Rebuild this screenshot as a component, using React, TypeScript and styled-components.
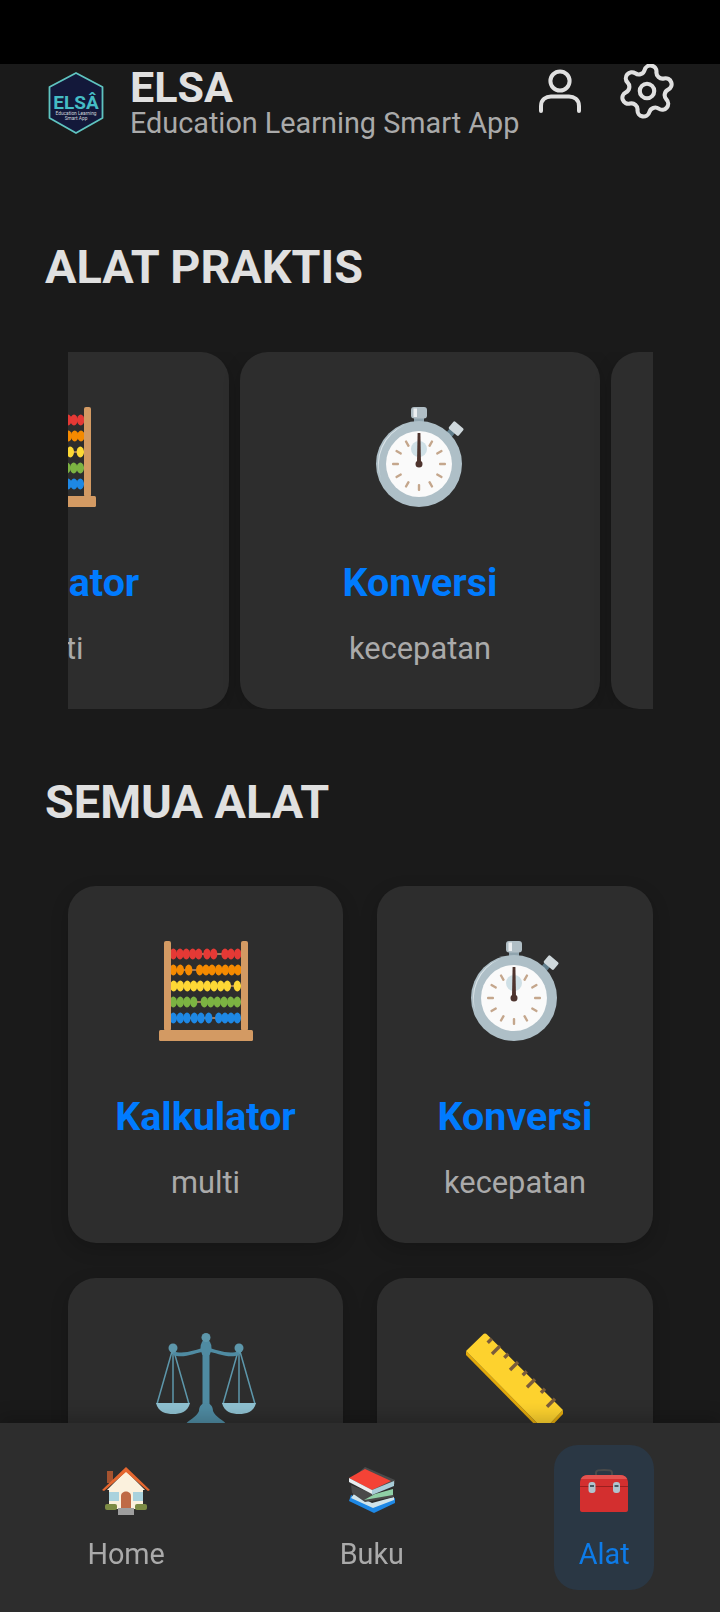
import * as React from 'react';
import styled, { createGlobalStyle } from 'styled-components';

const GlobalStyle = createGlobalStyle`
  html, body {
    margin: 0;
    padding: 0;
    width: 720px;
    height: 1612px;
    overflow: hidden;
    background: #1a1a1a;
    font-family: Roboto, "Liberation Sans", sans-serif;
  }
`;

const StatusBar = styled.div`
  height: 64px;
  background: #000;
`;

const Header = styled.header`
  display: flex;
  align-items: center;
  height: 77px;
  padding: 0 42px 0 46px;
  overflow: hidden;
`;

const Brand = styled.div`
  display: flex;
  align-items: center;
  flex: 1;
`;

const LogoBox = styled.div`
  width: 60px;
  height: 64px;
  margin-right: 24px;
  display: flex;
  align-items: center;
`;

const BrandText = styled.div`
  display: flex;
  flex-direction: column;
`;

const BrandName = styled.div`
  font-size: 43px;
  line-height: 41px;
  font-weight: 700;
  color: #e0e0e0;
`;

const BrandSub = styled.div`
  font-size: 28.8px;
  line-height: 30px;
  color: #aaa;
`;

const HeaderIcons = styled.div`
  display: flex;
  align-items: center;
  align-self: flex-start;
  gap: 35px;
  height: 54px;
`;

const SectionTitle = styled.h2<{ $top: number }>`
  margin: ${p => p.$top}px 0 0 45px;
  font-size: 46.8px;
  line-height: 54px;
  font-weight: 700;
  color: #e0e0e0;
`;

const CarouselClip = styled.div`
  margin: 58px 67px 0 68px;
  overflow: hidden;
`;

const CarouselTrack = styled.div`
  display: flex;
  gap: 11px;
  margin-left: -199px;
`;

const Card = styled.div<{ $wide?: boolean }>`
  box-sizing: border-box;
  flex: none;
  width: ${p => (p.$wide ? '360px' : 'auto')};
  height: 357px;
  padding-top: 55px;
  border-radius: 28px;
  background: #2d2d2d;
  display: flex;
  flex-direction: column;
  align-items: center;
  box-shadow: 0 6px 18px rgba(0, 0, 0, 0.18);
`;

const EmojiBox = styled.div`
  height: 100px;
  display: flex;
  align-items: center;
  justify-content: center;
`;

const CardTitle = styled.div`
  margin-top: 52px;
  font-size: 39.4px;
  line-height: 48px;
  font-weight: 700;
  color: #007bff;
  white-space: nowrap;
`;

const CardSub = styled.div`
  margin-top: 20px;
  font-size: 30.8px;
  line-height: 44px;
  color: #aaa;
  white-space: nowrap;
`;

const Grid = styled.div`
  display: grid;
  grid-template-columns: 275px 276px;
  column-gap: 34px;
  row-gap: 35px;
  margin: 57px 67px 0 68px;
`;

const BottomNav = styled.nav`
  position: fixed;
  left: 0;
  right: 0;
  bottom: 0;
  box-sizing: border-box;
  height: 189px;
  padding: 22px 3px 22px 0;
  background: #2d2d2d;
  display: flex;
  justify-content: space-around;
  box-shadow: 0 -6px 16px rgba(0, 0, 0, 0.2);
`;

const NavSlot = styled.div<{ $active?: boolean }>`
  box-sizing: border-box;
  height: 145px;
  padding: 21px 24.5px 0;
  border-radius: 24px;
  display: flex;
  flex-direction: column;
  align-items: center;
  background: ${p => (p.$active ? '#2a3744' : 'transparent')};
`;

const NavEmoji = styled.div`
  height: 50px;
  display: flex;
  align-items: center;
  justify-content: center;
`;

const NavLabel = styled.div<{ $active?: boolean }>`
  margin-top: 20px;
  font-size: 28.8px;
  line-height: 36px;
  color: ${p => (p.$active ? '#0d7be8' : '#aaa')};
`;

const UserIcon = () => (
  <svg width="42" height="44" viewBox="0 0 42 44" fill="none" stroke="#e0e0e0" strokeWidth="4" strokeLinecap="round">
    <circle cx="21" cy="12" r="9.600" />
    <path d="M2 42v-5c0-6.500 5-9.500 10-9.500h18c5 0 10 3 10 9.500v5" />
  </svg>
);

const GearIcon = () => (
  <svg width="62" height="62" viewBox="0 0 24 24" fill="none" stroke="#e0e0e0" strokeWidth="1.600" strokeLinecap="round" strokeLinejoin="round">
    <g transform="rotate(10 12 12)">
      <path d="M9.671 4.136a2.34 2.34 0 0 1 4.659 0 2.34 2.34 0 0 0 3.319 1.915 2.34 2.34 0 0 1 2.33 4.033 2.34 2.34 0 0 0 0 3.831 2.34 2.34 0 0 1-2.33 4.033 2.34 2.34 0 0 0-3.319 1.915 2.34 2.34 0 0 1-4.659 0 2.34 2.34 0 0 0-3.32-1.915 2.34 2.34 0 0 1-2.33-4.033 2.34 2.34 0 0 0 0-3.831A2.34 2.34 0 0 1 6.35 6.051a2.34 2.34 0 0 0 3.319-1.915" />
    </g>
    <circle cx="12" cy="12" r="2.800" />
  </svg>
);

const Logo = () => (
  <svg width="60" height="64" viewBox="0 0 60 64">
    <polygon points="30,2 56.500,16 56.500,47 30,62 3.500,47 3.500,16" fill="#13183a" stroke="#5fc4c0" strokeWidth="1.800" strokeLinejoin="round" />
    <text x="30" y="38" textAnchor="middle" fontSize="19" fontWeight="700" fill="#45bcc4" fontFamily="Roboto, sans-serif">ELSÂ</text>
    <text x="30" y="44" textAnchor="middle" fontSize="4.800" fill="#cfd6dc" fontFamily="Roboto, sans-serif">Education Learning</text>
    <text x="30" y="49" textAnchor="middle" fontSize="4.800" fill="#cfd6dc" fontFamily="Roboto, sans-serif">Smart App</text>
  </svg>
);

// bead centres read off the reference, px from the left of the frame
const abacusRows: { color: string; beads: number[] }[] = [
  { color: '#e53935', beads: [14.3, 21, 27.3, 33.7, 39.7, 48, 54.7, 66, 72, 78.7] },
  { color: '#f58a00', beads: [14.3, 21.3, 29.7, 40.7, 47, 53, 59.7, 66.3, 72.7, 79] },
  { color: '#fdd835', beads: [14.7, 21.3, 28.3, 34.7, 41.3, 48.3, 55, 61.7, 68.3, 78.3] },
  { color: '#7cb342', beads: [14.3, 21.3, 28, 34.7, 45.3, 51.7, 58.3, 65, 71.7, 78.3] },
  { color: '#1e88e5', beads: [14.3, 21.3, 28, 35.3, 42, 49.7, 59.7, 66, 72, 78.3] },
];

const Abacus = () => (
  <svg width="94" height="100" viewBox="0 0 94 100">
    {abacusRows.map((row, i) => (
      <g key={row.color}>
        <rect x="10" y={12 + i * 16} width="74" height="2" fill="#a1785a" />
        {row.beads.map(b => (
          <ellipse key={b} cx={b} cy={13 + i * 16} rx="3.700" ry="5.400" fill={row.color} />
        ))}
      </g>
    ))}
    <rect x="5" y="0" width="7" height="90" rx="2" fill="#d39a63" />
    <rect x="82" y="0" width="7" height="90" rx="2" fill="#d39a63" />
    <rect x="0" y="89" width="94" height="11" rx="1.500" fill="#d39a63" />
  </svg>
);

const tickAngles = [30, 60, 90, 120, 150, 180, 210, 240, 270, 300, 330];

const Stopwatch = () => (
  <svg width="90" height="100" viewBox="0 0 90 100">
    <rect x="39" y="9" width="10" height="9" fill="#90a4ae" />
    <rect x="36" y="0" width="16" height="11.500" rx="3" fill="#b0bec5" />
    <rect x="38.500" y="1.500" width="3.500" height="8.500" fill="#eceff1" />
    <g transform="rotate(40 80 23)">
      <rect x="75" y="25" width="7" height="9" fill="#607d8b" />
      <rect x="73.500" y="16.500" width="13" height="9.500" rx="1.500" fill="#cfd8dc" />
    </g>
    <circle cx="44" cy="57" r="43" fill="#aebfc7" />
    <path d="M6 72a41 41 0 0 1 24-54 44 44 0 0 0-24 54z" fill="#dbe4e8" />
    <circle cx="44" cy="57" r="33" fill="#fafafa" />
    <circle cx="44" cy="42" r="8" fill="#cfe0e6" />
    {tickAngles.map(a => (
      <rect key={a} x="42.800" y="30" width="2.400" height="7" rx="1" fill="#c4a68c" transform={`rotate(${a} 44 57)`} />
    ))}
    <path d="M42.600 26h2.800l.6 30h-4z" fill="#4e342e" />
    <circle cx="44" cy="57" r="3.500" fill="#4e342e" />
  </svg>
);

const Scales = () => (
  <svg width="100" height="100" viewBox="0 0 100 100">
    <g fill="none" stroke="#5d97ab" strokeWidth="1.500">
      <path d="M17 15 1 71M17 15 33 71M17 15v56" />
      <path d="M83 15 67 71M83 15 99 71M83 15v56" />
    </g>
    <path d="M17 18c10 4 22-1 33-4 11 3 23 8 33 4v4c-10 4-22-2-33-4-11 2-23 8-33 4z" fill="#4f8ba2" />
    <rect x="46.500" y="14" width="7" height="62" fill="#4f8ba2" />
    <ellipse cx="50" cy="15" rx="5.500" ry="9" fill="#4f8ba2" />
    <circle cx="50" cy="4.500" r="4.500" fill="#5d97ab" />
    <circle cx="17" cy="15" r="4.500" fill="#5d97ab" />
    <circle cx="83" cy="15" r="4.500" fill="#5d97ab" />
    <path d="M0 70h34c-2 9-10 11-17 11S2 79 0 70z" fill="#8fc1d1" />
    <path d="M66 70h34c-2 9-10 11-17 11s-15-2-17-11z" fill="#8fc1d1" />
    <path d="M43 78c0-5 3-8 7-8s7 3 7 8c2 6 11 9 14 14H29c3-5 12-8 14-14z" fill="#4f8ba2" />
  </svg>
);

const rulerTicks = [
  [26.7, 5.7, 4],
  [35, 13, 8],
  [43.3, 20.7, 4],
  [53, 29, 8],
  [61.7, 38.3, 4],
  [70, 46.3, 8],
  [80, 55.7, 4],
  [90, 65.7, 8],
];

const Ruler = () => (
  <svg width="100" height="100" viewBox="0 0 100 100" overflow="visible">
    <path d="M1 18 79 97 79 101 1 22z" fill="#e3a90b" />
    <path d="M79 97 98 77V81L79 101z" fill="#e3a90b" />
    <path d="M18 1.500c1-1.500 3-1.500 4 0L98 77 79 97 1 18z" fill="#fdd22e" />
    {rulerTicks.map(([x, y, d]) => (
      <line key={x} x1={x} y1={y} x2={x - d} y2={y + d} stroke="#7a5c3b" strokeWidth="3.400" />
    ))}
  </svg>
);

const House = () => (
  <svg width="48" height="48" viewBox="0 0 48 48">
    <rect x="5" y="4" width="6" height="12" fill="#a6532f" />
    <path d="M24 4 43 23H5z" fill="#fbf1dd" />
    <rect x="7" y="21" width="34" height="21" fill="#fbf1dd" />
    <path d="M0 23 24 0l24 23-2 1L24 5 2 24z" fill="#e5672f" />
    <path d="M19 41V29c0-6 10-6 10 0v12z" fill="#bf6a45" />
    <rect x="7" y="25" width="10" height="9" fill="#a9d2dd" />
    <rect x="31" y="25" width="10" height="9" fill="#a9d2dd" />
    <rect x="3" y="37" width="12" height="6" rx="2" fill="#7c8b44" />
    <rect x="33" y="37" width="12" height="6" rx="2" fill="#7c8b44" />
    <rect x="16" y="41" width="16" height="7" fill="#9e9e9e" />
  </svg>
);

const Books = () => (
  <svg width="48" height="48" viewBox="0 0 48 48">
    <path d="M1 34 26 46 47 36V31L24 39 3 28z" fill="#1e88e5" />
    <path d="M3 31 25 41 46 33v-3L24 36 6 27z" fill="#cfe3ea" />
    <path d="M3 18 28 28 44 24 46 30 17 35 4 26z" fill="#4a4a4a" />
    <path d="M16 33 45 28V22L27 27z" fill="#8fd0a6" />
    <path d="M17 0 47 13V17L22 26 1 14z" fill="#4a4a4a" />
    <path d="M1 11 17 2 43 14 24 23z" fill="#f44336" />
    <path d="M1 11 24 23v4L1 15z" fill="#e8eef0" />
    <path d="M24 23 46 14v5L24 28z" fill="#a9cdd8" />
  </svg>
);

const Toolbox = () => (
  <svg width="48" height="44" viewBox="0 0 48 44">
    <path d="M16 6V4c0-3 3-3 8-3s8 0 8 3v2" fill="none" stroke="#4a4a4a" strokeWidth="2" />
    <path d="M0 41V14c0-5 3-8 8-8h32c5 0 8 3 8 8v27c0 1-1 2-2 2H2c-1 0-2-1-2-2z" fill="#d32f2f" />
    <path d="M1 10c1-3 4-4 7-4h32c3 0 6 1 7 4z" fill="#e35350" />
    <rect x="0" y="17" width="48" height="1" fill="#9a1f1f" />
    <rect x="8.500" y="13" width="7" height="11" rx="3" fill="#b0c4ce" />
    <rect x="33" y="13" width="7" height="11" rx="3" fill="#b0c4ce" />
    <rect x="10" y="16" width="4" height="2" fill="#455a64" />
    <rect x="34.500" y="16" width="4" height="2" fill="#455a64" />
  </svg>
);

const tools = [
  { title: 'Kalkulator', sub: 'multi', icon: <Abacus /> },
  { title: 'Konversi', sub: 'kecepatan', icon: <Stopwatch /> },
];

const navItems = [
  { label: 'Home', icon: <House /> },
  { label: 'Buku', icon: <Books /> },
  { label: 'Alat', icon: <Toolbox />, active: true },
];

const App = () => {
  return (
    <>
      <GlobalStyle />
      <StatusBar />
      <Header>
        <Brand>
          <LogoBox>
            <Logo />
          </LogoBox>
          <BrandText>
            <BrandName>ELSA</BrandName>
            <BrandSub>Education Learning Smart App</BrandSub>
          </BrandText>
        </Brand>
        <HeaderIcons>
          <UserIcon />
          <GearIcon />
        </HeaderIcons>
      </Header>

      <SectionTitle $top={99}>ALAT PRAKTIS</SectionTitle>
      <CarouselClip>
        <CarouselTrack>
          {tools.map(t => (
            <Card $wide key={t.title}>
              <EmojiBox>{t.icon}</EmojiBox>
              <CardTitle>{t.title}</CardTitle>
              <CardSub>{t.sub}</CardSub>
            </Card>
          ))}
          <Card $wide />
        </CarouselTrack>
      </CarouselClip>

      <SectionTitle $top={66}>SEMUA ALAT</SectionTitle>
      <Grid>
        {tools.map(t => (
          <Card key={t.title}>
            <EmojiBox>{t.icon}</EmojiBox>
            <CardTitle>{t.title}</CardTitle>
            <CardSub>{t.sub}</CardSub>
          </Card>
        ))}
        <Card>
          <EmojiBox>
            <Scales />
          </EmojiBox>
        </Card>
        <Card>
          <EmojiBox>
            <Ruler />
          </EmojiBox>
        </Card>
      </Grid>

      <BottomNav>
        {navItems.map(item => (
          <NavSlot key={item.label} $active={item.active}>
            <NavEmoji>{item.icon}</NavEmoji>
            <NavLabel $active={item.active}>{item.label}</NavLabel>
          </NavSlot>
        ))}
      </BottomNav>
    </>
  );
};

export default App;
